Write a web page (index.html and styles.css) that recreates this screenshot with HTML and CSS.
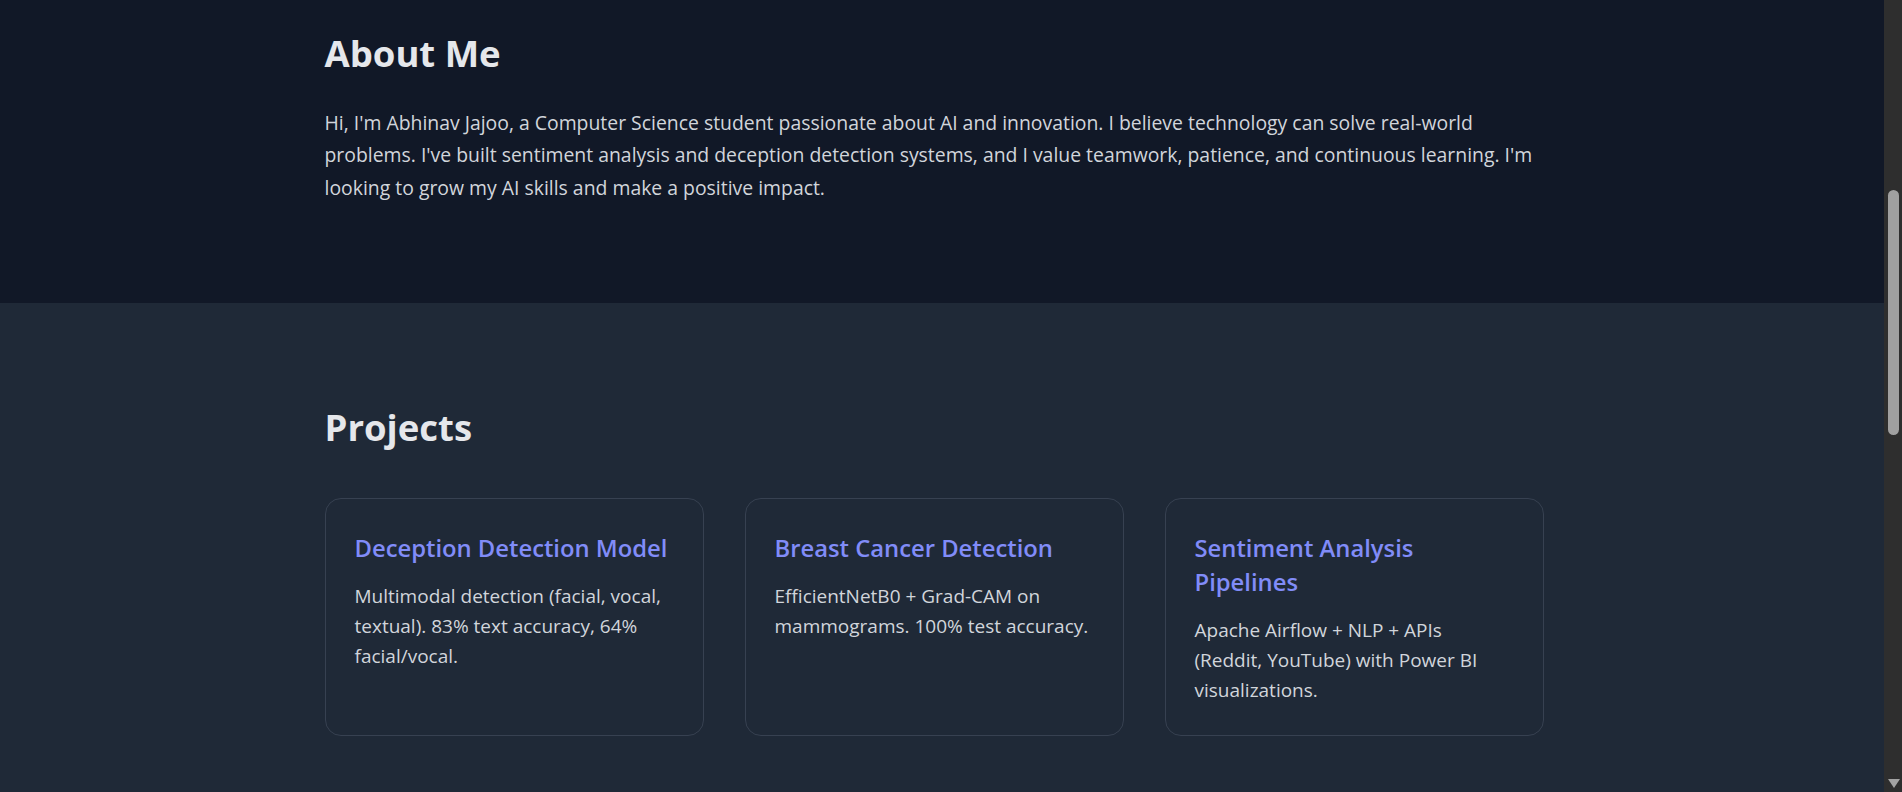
FILE: index.html
```html
<!DOCTYPE html>
<html lang="en">
<head>
<meta charset="utf-8">
<title>Abhinav Jajoo</title>
<link rel="stylesheet" href="styles.css">
</head>
<body>
<div class="viewport">
  <main class="page">
    <section class="section about">
      <div class="container">
        <h2 class="section-title">About Me</h2>
        <p class="about-text">Hi, I'm Abhinav Jajoo, a Computer Science student passionate about AI and innovation. I believe technology can solve real-world problems. I've built sentiment analysis and deception detection systems, and I value teamwork, patience, and continuous learning. I'm looking to grow my AI skills and make a positive impact.</p>
      </div>
    </section>
    <section class="section projects">
      <div class="container">
        <h2 class="section-title">Projects</h2>
        <div class="project-grid">
          <article class="card">
            <h3 class="card-title">Deception Detection Model</h3>
            <p class="card-text">Multimodal detection (facial, vocal, textual). 83% text accuracy, 64% facial/vocal.</p>
          </article>
          <article class="card">
            <h3 class="card-title">Breast Cancer Detection</h3>
            <p class="card-text">EfficientNetB0 + Grad-CAM on mammograms. 100% test accuracy.</p>
          </article>
          <article class="card">
            <h3 class="card-title">Sentiment Analysis Pipelines</h3>
            <p class="card-text">Apache Airflow + NLP + APIs (Reddit, YouTube) with Power BI visualizations.</p>
          </article>
        </div>
      </div>
    </section>
  </main>
  <div class="scrollbar" aria-hidden="true">
    <div class="scroll-thumb"></div>
    <div class="scroll-arrow"></div>
  </div>
</div>
</body>
</html>
```
FILE: styles.css
```css
* {
  box-sizing: border-box;
}

html, body {
  margin: 0;
  padding: 0;
  height: 100%;
  overflow: hidden;
}

body {
  font-family: "Segoe UI", "Open Sans", "Noto Sans", sans-serif;
  background: #1f2937;
  color: #d1d5db;
}

.viewport {
  display: flex;
  height: 792px;
}

.page {
  flex: 1;
  min-width: 0;
  display: flex;
  flex-direction: column;
}

.container {
  max-width: 1235px;
  margin: 0 auto;
  padding-right: 16px;
  width: 100%;
}

.about {
  background: #111827;
  padding-top: 29px;
  height: 303px;
}

.projects {
  background: #1f2937;
  padding-top: 100px;
  flex: 1;
}

.section-title {
  margin: 0;
  font-size: 36.5px;
  line-height: 48px;
  font-weight: 700;
  color: #e5e7eb;
}

.about .section-title {
  margin-bottom: 30px;
}

.projects .section-title {
  margin-bottom: 47px;
}

.about-text {
  margin: 0;
  font-size: 19.4px;
  line-height: 32.4px;
  color: #d1d5db;
}

.project-grid {
  display: grid;
  grid-template-columns: repeat(3, 1fr);
  gap: 41px;
}

.card {
  border: 1px solid #374151;
  border-radius: 16px;
  padding: 32px 32px 30px 29px;
  background: #1f2937;
}

.card-title {
  margin: 0 0 16px;
  font-size: 23.8px;
  line-height: 34px;
  font-weight: 600;
  color: #818cf8;
}

.card-text {
  margin: 0;
  font-size: 19px;
  line-height: 30px;
  color: #d1d5db;
}

.scrollbar {
  width: 18px;
  flex: none;
  background: #2e2e2e;
  display: flex;
  flex-direction: column;
  align-items: center;
  padding-left: 1px;
}

.scroll-thumb {
  margin-top: 190px;
  width: 11px;
  height: 245px;
  background: #a0a0a0;
  border-radius: 6px;
}

.scroll-arrow {
  margin-top: auto;
  margin-bottom: 4px;
  width: 0;
  height: 0;
  border-left: 6px solid transparent;
  border-right: 6px solid transparent;
  border-top: 9px solid #a3a3a3;
}
```
